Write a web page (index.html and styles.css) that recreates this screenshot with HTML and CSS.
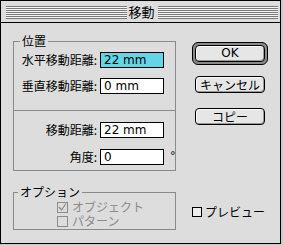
FILE: index.html
```html
<!DOCTYPE html>
<html lang="ja">
<head>
<meta charset="utf-8">
<title>移動</title>
<link rel="stylesheet" href="styles.css">
</head>
<body>
<div class="window">
  <div class="titlebar">
    <span class="stripes"></span>
    <span class="title">移動</span>
    <span class="stripes"></span>
  </div>
  <div class="content">
    <div class="left">
      <fieldset class="group pos">
        <legend>位置</legend>
        <div class="rows first">
          <span class="lbl">水平移動距離:</span><span class="field sel">22 mm</span><span></span>
          <span class="lbl">垂直移動距離:</span><span class="field">0 mm</span><span></span>
        </div>
        <hr class="sep">
        <div class="rows second">
          <span class="lbl">移動距離:</span><span class="field">22 mm</span><span></span>
          <span class="lbl">角度:</span><span class="field">0</span><span class="deg">°</span>
        </div>
      </fieldset>
      <fieldset class="group opts">
        <legend>オプション</legend>
        <div class="check dis"><span class="box"><svg width="9" height="9" viewBox="0 0 9 9"><path d="M1 4 L3.5 7 L8 0.5" fill="none" stroke="#8a8a8a" stroke-width="1.2"/></svg></span>オブジェクト</div>
        <div class="check dis"><span class="box"></span>パターン</div>
      </fieldset>
    </div>
    <div class="right">
      <div class="ring"><div class="btn">OK</div></div>
      <div class="btn cancel">キャンセル</div>
      <div class="btn copy">コピー</div>
      <div class="check preview"><span class="box"></span>プレビュー</div>
    </div>
  </div>
</div>
</body>
</html>
```

FILE: styles.css
```css
html, body {
  margin: 0;
  padding: 0;
}
body {
  background: #cacaca;
  width: 283px;
  height: 245px;
  font-family: "Noto Sans CJK JP", "DejaVu Sans", sans-serif;
  font-size: 12px;
  color: #000;
}
.window {
  width: 281px;
  height: 244px;
  box-sizing: border-box;
  border: 1px solid #000;
  background: #dddddd;
  display: flex;
  flex-direction: column;
}
.titlebar {
  height: 22px;
  box-sizing: border-box;
  border-bottom: 1px solid #000;
  display: flex;
  align-items: center;
  padding: 0 2px 0 5px;
  background: #dddddd;
}
.stripes {
  flex: 1;
  height: 13px;
  background: repeating-linear-gradient(to bottom, #7a7a7a 0 1px, #f6f6f6 1px 2px);
  margin-top: 1px;
}
.title {
  font-size: 13px;
  line-height: 16px;
  padding: 0 3px 0 2px;
}
.content {
  flex: 1;
  display: grid;
  grid-template-columns: 163px 76px;
  column-gap: 16px;
  padding: 11px 0 0 12px;
}
.group {
  margin: 0;
  padding: 0;
  border: 1px solid #8a8a8a;
  min-width: 0;
}
.group legend {
  margin-left: 6px;
  padding: 0 2px;
  line-height: 14px;
  font-size: 12px;
}
.pos {
  padding-bottom: 5px;
}
.rows {
  display: grid;
  grid-template-columns: 83px 64px 1fr;
  column-gap: 3px;
  align-items: center;
}
.rows.first {
  margin-top: 4px;
  row-gap: 10px;
}
.rows.second {
  row-gap: 11px;
}
.lbl {
  text-align: right;
  line-height: 14px;
  white-space: nowrap;
}
.field {
  height: 16px;
  box-sizing: border-box;
  border: 1px solid #000;
  background: #fff;
  font-family: "DejaVu Sans", sans-serif;
  font-size: 12px;
  line-height: 14px;
  padding-left: 3px;
}
.field.sel {
  background: #64d4e6;
}
.deg {
  font-family: "DejaVu Sans", sans-serif;
  font-size: 11px;
  line-height: 12px;
  align-self: start;
  margin-top: 1px;
  padding-left: 3px;
}
.sep {
  border: 0;
  border-top: 1px solid #8a8a8a;
  margin: 16px 0 11px;
  height: 0;
}
.opts {
  margin-top: 14px;
  padding: 1px 0 1px 0;
}
.opts legend {
  margin-left: 4px;
}
.opts .check {
  margin-left: 43px;
}
.check {
  display: flex;
  align-items: center;
  line-height: 14px;
  white-space: nowrap;
}
.check .box {
  width: 11px;
  height: 11px;
  box-sizing: border-box;
  border: 1px solid #000;
  background: #eeeeee;
  margin-right: 4px;
  display: flex;
  align-items: center;
  justify-content: center;
}
.check.dis {
  color: #8a8a8a;
}
.check.dis .box {
  border-color: #8a8a8a;
  background: #dddddd;
}
.right {
  display: flex;
  flex-direction: column;
  align-items: flex-start;
  padding-top: 8px;
}
.ring {
  border: 1px solid #000;
  border-radius: 6px;
  padding: 2px;
  background: #8a8a8a;
}
.btn {
  width: 70px;
  height: 17px;
  box-sizing: border-box;
  border: 1px solid #000;
  border-radius: 4px;
  background: #e6e6e6;
  box-shadow: inset -1px -1px 0 #9a9a9a, inset 1px 1px 0 #fafafa;
  text-align: center;
  line-height: 15px;
  font-size: 12px;
}
.ring .btn {
  font-family: "DejaVu Sans", sans-serif;
}
.cancel {
  margin: 11px 0 0 3px;
}
.copy {
  margin: 15px 0 0 3px;
}
.preview {
  margin-top: 80px;
}
.preview .box {
  width: 10px;
  height: 10px;
  margin-right: 3px;
}
```
